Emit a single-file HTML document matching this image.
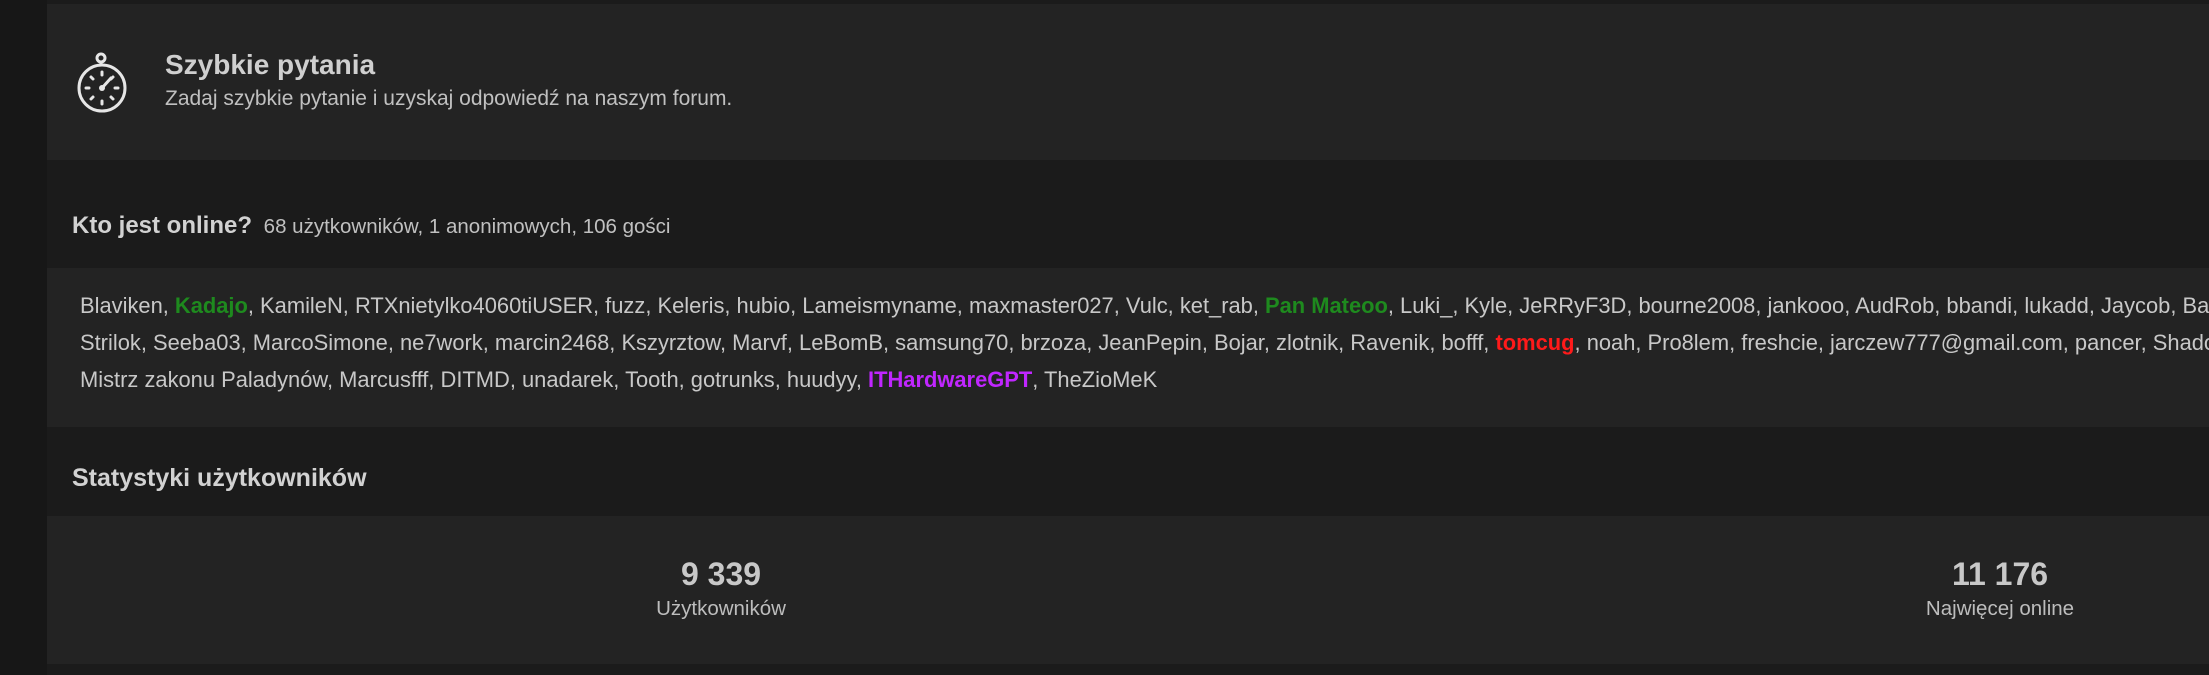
<!DOCTYPE html>
<html><head><meta charset="utf-8"><style>
html,body{margin:0;padding:0;}
body{width:2209px;height:675px;background:#1b1b1b;position:relative;overflow:hidden;font-family:"Liberation Sans",sans-serif;color:#c8c8c8;}
.strip{position:absolute;left:0;top:0;width:47px;height:675px;background:#171717;}
.panel{position:absolute;left:47px;right:0;background:#232323;}
.abs{position:absolute;white-space:nowrap;}
.g{color:#1e8a1e;font-weight:bold}
.r{color:#ff1a1a;font-weight:bold}
.p{color:#c026ff;font-weight:bold}
.names{font-size:21.9px;line-height:37px;color:#c8c8c8;left:80px;top:287px;}
.num{font-size:32px;font-weight:bold;color:#c8c8c8;transform:translateX(-50%);text-align:center}
.lab{font-size:20.5px;color:#bdbdbd;transform:translateX(-50%);text-align:center}
</style></head><body>
<div class="strip"></div>
<div class="panel" style="top:4px;height:156px;"></div>
<svg class="abs" style="left:74px;top:50px" width="56" height="70" viewBox="0 0 56 70">
<g fill="none" stroke="#e6e6e6" stroke-width="3" stroke-linecap="round">
<circle cx="28" cy="38" r="23"/>
<circle cx="27" cy="8" r="4"/>
<line x1="27" y1="12" x2="27" y2="15"/>
<line x1="28" y1="22" x2="28" y2="25"/><line x1="28" y1="51" x2="28" y2="54"/>
<line x1="12" y1="38" x2="15" y2="38"/><line x1="41" y1="38" x2="44" y2="38"/>
<line x1="17" y1="27" x2="19" y2="29"/><line x1="37" y1="47" x2="39" y2="49"/>
<line x1="17" y1="49" x2="19" y2="47"/><line x1="37" y1="29" x2="39" y2="27"/>
<line x1="28" y1="38" x2="37" y2="28"/>
</g><circle cx="28" cy="38" r="3" fill="#e6e6e6"/></svg>
<div class="abs" style="left:165px;top:49px;font-size:28px;font-weight:bold;color:#cfcfcf">Szybkie pytania</div>
<div class="abs" style="left:165px;top:87px;font-size:21px;color:#c0c0c0">Zadaj szybkie pytanie i uzyskaj odpowiedź na naszym forum.</div>
<div class="abs" style="left:72px;top:212px;font-size:24px;font-weight:bold;color:#d2d2d2">Kto jest online? <span style="font-size:20.5px;font-weight:normal;color:#c0c0c0;margin-left:5px">68 użytkowników, 1 anonimowych, 106 gości</span></div>
<div class="panel" style="top:268px;height:159px;"></div>
<div class="abs names">Blaviken, <span class="g">Kadajo</span>, KamileN, RTXnietylko4060tiUSER, fuzz, Keleris, hubio, Lameismyname, maxmaster027, Vulc, ket_rab, <span class="g">Pan Mateoo</span>, Luki_, Kyle, JeRRyF3D, bourne2008, jankooo, AudRob, bbandi, lukadd, Jaycob, Bartek<br>Strilok, Seeba03, MarcoSimone, ne7work, marcin2468, Kszyrztow, Marvf, LeBomB, samsung70, brzoza, JeanPepin, Bojar, zlotnik, Ravenik, bofff, <span class="r">tomcug</span>, noah, Pro8lem, freshcie, jarczew777@gmail.com, pancer, Shadow<br>Mistrz zakonu Paladynów, Marcusfff, DITMD, unadarek, Tooth, gotrunks, huudyy, <span class="p">ITHardwareGPT</span>, TheZioMeK</div>
<div class="abs" style="left:72px;top:464px;font-size:25px;font-weight:bold;color:#d2d2d2">Statystyki użytkowników</div>
<div class="panel" style="top:516px;height:148px;"></div>
<div class="abs num" style="left:721px;top:556px">9 339</div>
<div class="abs lab" style="left:721px;top:597px">Użytkowników</div>
<div class="abs num" style="left:2000px;top:556px">11 176</div>
<div class="abs lab" style="left:2000px;top:597px">Najwięcej online</div>
</body></html>
